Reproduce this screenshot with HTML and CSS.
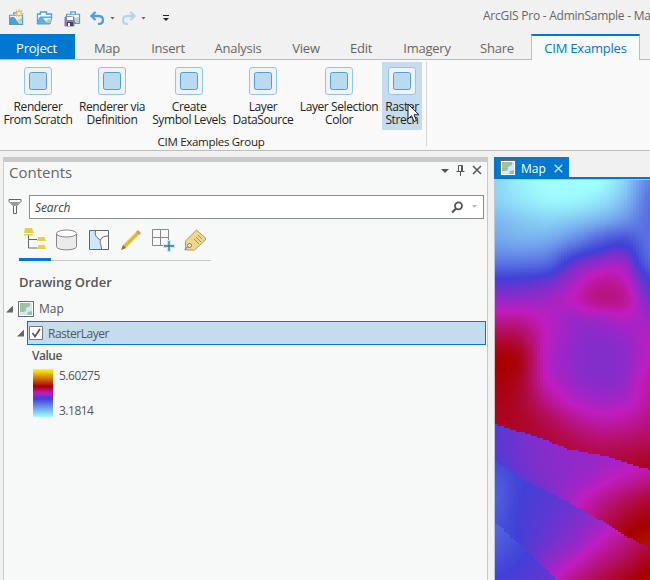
FILE: index.html
```html
<!DOCTYPE html>
<html lang="en">
<head>
<meta charset="utf-8">
<title>ArcGIS Pro - AdminSample</title>
<link rel="stylesheet" href="styles.css">
</head>
<body>
<svg class="defs" aria-hidden="true">
  <symbol id="button-icon" viewBox="0 0 28 28">
    <rect x=".5" y=".5" width="27" height="27" rx="2.5" fill="#f1f2f3" stroke="#8fc7e8"/>
    <rect x="5.5" y="5.5" width="17" height="17" rx="2" fill="#badaef" stroke="#4d9fd6"/>
  </symbol>
  <symbol id="map-icon" viewBox="0 0 16 16">
    <rect x=".5" y=".5" width="15" height="15" fill="#fff" stroke="#6b6b6b"/>
    <path d="M2 2h12v12H2z" fill="#d3e8f5"/>
    <path d="M2 2h10v3L8 7v3L5 11H2zM10 11l4-1v4H9z" fill="#9cc3a1"/>
  </symbol>
  <symbol id="case" viewBox="0 0 16 14">
    <path d="M5 3V1h5v2M.5 3.5h14v10H.5z" fill="#f8fbfd" stroke="#4f9fd4" stroke-width="1.3"/>
    <path d="M1 6q4-2 6 1l4 6H1z" fill="#4f9fd4"/>
    <path d="M9 8l5-2v7h-3z" fill="#bfd5b4"/>
  </symbol>
</svg>

<header class="titlebar">
  <div class="quick">
    <svg class="q-new" viewBox="0 0 18 18"><use href="#case" x="1" y="3" width="15" height="13"/><g stroke="#e0bd47" stroke-width="1.1"><path d="M11 0v9M6.500 4.500h9M7.800 1.300l6.400 6.400M14.200 1.300L7.800 7.700"/></g><rect x="9" y="2.500" width="4" height="4" fill="#fff3b0" stroke="#e0bd47"/></svg>
    <svg class="q-open" viewBox="0 0 18 18"><path d="M1.500 14V5h3V3h6v2h5v3" fill="#f8fbfd" stroke="#4f9fd4" stroke-width="1.300"/><path d="M1 15l3-7h12l-2 7z" fill="#65ade0" stroke="#4f9fd4"/><path d="M7 9h8l-1 5h-3z" fill="#e5efdf"/><path d="M10 14l2-4 3 1-1 3z" fill="#a9cbaa"/></svg>
    <svg class="q-save" viewBox="0 0 18 18"><use href="#case" x="2" y="2" width="15" height="13"/><path d="M1 8h9v9H1z" fill="#8a7bb9" stroke="#8a7bb9"/><path d="M3 8h6v3H3z" fill="#fff"/><path d="M3 13h6v4H3z" fill="#444"/><path d="M4 14h2v3H4z" fill="#fff"/></svg>
    <svg class="q-undo" viewBox="0 0 15 14"><path d="M5.500 1L1.500 5l4 4M2 5h6q5 0 5 4t-5 4" fill="none" stroke="#4f9fd8" stroke-width="2.300"/></svg>
    <i class="caret"></i>
    <svg class="q-redo" viewBox="0 0 15 14"><path d="M9.500 1l4 4-4 4M13 5H7Q2 5 2 9t5 4" fill="none" stroke="#b4d5ea" stroke-width="2.300"/></svg>
    <i class="caret"></i>
    <svg class="q-more" viewBox="0 0 6 7"><path d="M0 .5h6" stroke="#222"/><path d="M0 3h6L3 6z" fill="#222"/></svg>
  </div>
  <div class="app-title">ArcGIS Pro - AdminSample - Map</div>
</header>

<nav class="tabs">
  <span class="tab project">Project</span><span class="tab">Map</span><span class="tab">Insert</span><span class="tab">Analysis</span><span class="tab">View</span><span class="tab">Edit</span><span class="tab">Imagery</span><span class="tab">Share</span><i></i><span class="tab active">CIM Examples</span>
</nav>

<section class="ribbon">
  <div class="group">
    <div class="buttons">
      <div class="button"><svg><use href="#button-icon"/></svg><span>Renderer<br>From Scratch</span></div>
      <div class="button"><svg><use href="#button-icon"/></svg><span>Renderer via<br>Definition</span></div>
      <div class="button"><svg><use href="#button-icon"/></svg><span>Create<br>Symbol Levels</span></div>
      <div class="button"><svg><use href="#button-icon"/></svg><span>Layer<br>DataSource</span></div>
      <div class="button"><svg><use href="#button-icon"/></svg><span>Layer Selection<br>Color</span></div>
      <div class="button hover"><svg><use href="#button-icon"/></svg><span>Raster<br>Strech</span>
        <svg class="cursor" viewBox="0 0 13 20"><path d="M1 1v15l3.500-3.300L7 18.500l2.500-1-2.500-5.700h5z" fill="#fff" stroke="#15152a"/></svg>
      </div>
    </div>
    <div class="group-name">CIM Examples Group</div>
  </div>
</section>

<main class="workspace">
  <aside class="contents">
    <div class="pane-head">
      <h1>Contents</h1>
      <svg class="pane-tools" viewBox="0 0 41 12"><path d="M0 5h8L4 9z" fill="#555"/><path d="M17.500 7V1.500h4V7M15.500 7.500h8M19.500 8v4M20.500 1v6" fill="none" stroke="#555"/><path d="M32 2l8 8M40 2l-8 8" stroke="#555" stroke-width="1.500"/></svg>
    </div>
    <div class="search-row">
      <svg class="funnel" viewBox="0 0 14 17"><path d="M1 1.500h12v2L8.500 8v7.500h-3V8L1 3.500z" fill="#f7f9f8" stroke="#656565"/><path d="M2 4h10L8 8H6z" fill="#999"/></svg>
      <div class="search"><em>Search</em>
        <svg class="search-tools" viewBox="0 0 27 13"><circle cx="7.500" cy="4.800" r="3.500" fill="none" stroke="#555" stroke-width="1.800"/><path d="M5 7.500L1 11.500" stroke="#555" stroke-width="2.200"/><path d="M21 4h5l-2.500 3z" fill="#b5b5b5"/></svg>
      </div>
    </div>
    <div class="list-tabs">
      <svg viewBox="0 0 32 31"><path d="M9.500 7v14H18M9.500 12.500H18" fill="none" stroke="#666"/><path d="M6 1h7l2 5H5zM5 7h9v1.500H5zM19.500 10h6l1.500 4h-9zM19.500 18h6l1.500 4h-9z" fill="#e6ce50"/></svg>
      <svg viewBox="0 0 32 28"><path d="M5.500 5.500v13c0 4.500 20 4.500 20 0v-13" fill="#ebebeb" stroke="#858585"/><ellipse cx="15.500" cy="5.500" rx="10" ry="3.500" fill="#fff" stroke="#858585"/></svg>
      <svg viewBox="0 0 32 28"><path d="M6.500 2.500h19v19h-19z" fill="#fafafa" stroke="#666"/><path d="M7 3h5l1 5 5 5-1 2 2 6H7z" fill="#cfe8f8"/><path d="M12.500 3c-1 5 1 6 5 9.500-1 3 1 4 1 9M17.500 12c1-3 4-4 8-4" fill="none" stroke="#666"/></svg>
      <svg viewBox="0 0 32 28"><path d="M8 17L22 3l3 3-14 14-4 1.500z" fill="#e3c942"/><path d="M9 19L24 4" stroke="#b39b33" stroke-width=".7"/><path d="M21 4l2-2 3 3-2 2z" fill="#d89080"/><path d="M6 22l2-5 3 3z" fill="#8b713b"/></svg>
      <svg viewBox="0 0 32 28"><path d="M5.500 1.500h16v16h-16zM13.500 1.500v16M5.500 9.500h16" fill="#fafafa" stroke="#888"/><path d="M22 12v12M16 18h12" stroke="#c5e9fa" stroke-width="4"/><path d="M22 13v10M17 18h10" stroke="#3f7186" stroke-width="1.300"/></svg>
      <svg viewBox="0 0 32 28"><path d="M6.500 13L17.500 2l9 8v2L15.500 22h-9z" fill="#eed88d" stroke="#b49b61"/><path d="M15 11l5 5M17 9l5 5M19 7l4 4" stroke="#a18a54"/><circle cx="10.500" cy="17.500" r="2" fill="#fff" stroke="#777"/><path d="M9.500 18l-4 4" stroke="#777"/></svg>
    </div>
    <h2>Drawing Order</h2>
    <div class="tree-row map-row"><i class="expander"></i><svg class="map-icon"><use href="#map-icon"/></svg><span>Map</span></div>
    <div class="tree-row layer-row"><i class="expander"></i><div class="layer"><svg class="check" viewBox="0 0 14 14"><path d="M.5.500h13v13H.5z" fill="#fff" stroke="#777"/><path d="M3.500 7l2.500 3.500L11 3" fill="none" stroke="#555" stroke-width="1.600"/></svg><span>RasterLayer</span></div></div>
    <div class="legend">
      <h3>Value</h3>
      <div class="ramp-row"><div class="ramp"></div><div class="ramp-values"><span>5.60275</span><span>3.1814</span></div></div>
    </div>
  </aside>
  <section class="view">
    <div class="view-tab"><svg class="map-icon"><use href="#map-icon"/></svg><span>Map</span><svg class="close" viewBox="0 0 9 9"><path d="M.7.700l7.600 7.600M8.300.700L.7 8.300" stroke="#c2e2f7" stroke-width="1.300"/></svg></div>
    <canvas id="raster" width="155" height="400"></canvas>
  </section>
</main>
<script src="raster.js"></script>
</body>
</html>
```
FILE: raster.js
```js
// Colour stops of the stretch ramp, by percent of the value range.
const stops = [[0,160,255,255],[38,64,64,216],[50,192,28,192],[64,168,0,0],[100,255,255,0]];
// Each zone is a smooth surface sampled on a 7-column grid with 20px rows.
const zones = [
  { top: 0, rows: [
    [8,3,0,0,0,9,25],[9,5,2,2,5,13,28],[14,11,9,11,15,21,29],[18,16,17,23,31,35,28],
    [26,26,28,39,44,45,30],[38.5,39,41,47,52,50.5,38],[46,46,47,50,54,53,43],[53,53,49.5,46.5,47,48.5,47.5],
    [60,58.5,50,45.7,44.7,46,49.2],[64,62,49.5,45.5,44.2,45.3,50],[63.5,61,50.5,46.3,44.6,45.8,52],[62.5,60.5,54,49,47.2,48,52.5],
    [61.5,61,58,54,51.5,52,54.5],[60,60.5,60,58,56,56.5,57.5],[60,60,61,60,59.5,60,61],[60,60,61,61,61,62,62]] },
  { top: 240, line: [[0,244],[48,259],[73,269],[110,276],[155,290]], rows: [
    [40,43,44.5,45,46,47,48],[40,43,44.5,45.5,46,47,48],[39.5,42.5,44.5,45.5,46.5,48,50],[38,41,44,46,48.5,51.5,54],
    [37,39,42.5,48,53,57,60],[36,37,41,50,56,61,63.5],[36,37,41,52,59,64,66],[36,37,41,54,60,65,67]] },
  { top: 280, line: [[0,282],[33,302],[73,322],[100,337],[133,357],[155,368]], rows: [
    [36,39,41,43,45,48,50],[33,37.5,40,42.5,45,48,50],[32,38,40,42,45,48,51],[34,38.5,41,43.5,46.5,50,53],
    [36,38.5,42,45,49.5,54,58],[37,40,44.5,49,54,58,62],[38,42,48,53.5,58,62,65]] },
  { top: 340, line: [[0,342],[27,367],[45,383],[62,400],[155,490]], rows: [
    [30,34,38,40,40,40,40],[32,36,39,40,40,40,40],[35,38,40,42,42,42,42],[38,39.5,41.5,43,44,44,44]] }
];
const cubic = (a, b, c, d, t) =>
  b + .5 * t * (c - a + t * (2 * a - 5 * b + 4 * c - d + t * (3 * (b - c) + d - a)));
const at = (list, i) => list[Math.max(0, Math.min(list.length - 1, i))];
function sample(zone, x, y) {
  const gx = x / 155 * 6, gy = (y - zone.top) / 20;
  const i = Math.floor(gx), j = Math.floor(gy), u = gx - i, v = gy - j;
  const r = [-1, 0, 1, 2].map(k => {
    const row = at(zone.rows, j + k);
    return cubic(at(row, i - 1), at(row, i), at(row, i + 1), at(row, i + 2), u);
  });
  return cubic(r[0], r[1], r[2], r[3], v);
}
function lineY(line, x) {
  let k = 1;
  while (k < line.length - 1 && line[k][0] < x) k++;
  const [x0, y0] = line[k - 1], [x1, y1] = line[k];
  return y0 + (y1 - y0) * (x - x0) / (x1 - x0);
}
function color(value) {
  const v = Math.max(0, Math.min(100, value));
  let k = 1;
  while (stops[k][0] < v) k++;
  const a = stops[k - 1], b = stops[k], t = (v - a[0]) / (b[0] - a[0]);
  return `rgb(${[1, 2, 3].map(n => Math.round(a[n] + (b[n] - a[n]) * t))})`;
}
const ctx = document.getElementById('raster').getContext('2d');
const cellW = 3, cellH = 2;
for (let y = 0; y < 400; y += cellH) {
  for (let x = 0; x < 155; x += cellW) {
    let zone = zones[0];
    for (const z of zones.slice(1)) if (y + 1 > lineY(z.line, x + 1.5)) zone = z;
    ctx.fillStyle = color(sample(zone, x + 1.5, y + 1));
    ctx.fillRect(x, y, cellW, cellH);
  }
}
```
FILE: styles.css
```css
* { box-sizing: border-box; }
body { margin: 0; width: 650px; height: 580px; overflow: hidden; background: #f1f1f1; color: #555; font: 12px "Open Sans", "Noto Sans", sans-serif; }
svg { display: block; flex: none; }
h1, h2, h3 { margin: 0; }
.defs { display: none; }

.titlebar { display: flex; justify-content: space-between; height: 34px; }
.quick { display: flex; align-items: center; padding: 2px 0 0 8px; }
.q-new, .q-open, .q-save { width: 18px; height: 18px; }
.q-open, .q-save { margin-left: 10px; }
.q-undo, .q-redo { width: 15px; height: 14px; }
.q-undo { margin-left: 8px; }
.q-redo { margin-left: 6px; }
.q-more { width: 6px; height: 7px; margin-left: 17px; }
.caret { width: 5px; height: 3px; margin-left: 5px; background: #666; clip-path: polygon(0 0, 100% 0, 50% 100%); }
.app-title { width: 167px; padding-top: 8px; line-height: 16px; letter-spacing: -.25px; white-space: nowrap; overflow: hidden; color: #666; }

.tabs { display: grid; grid-template-columns: 75px 64px 58px 82px 54px 56px 76px 64px 2px 109px 10px; height: 26px; border-bottom: 1px solid #bdbdbd; }
.tab { height: 25px; text-align: center; font-size: 13px; line-height: 29px; letter-spacing: -.22px; white-space: nowrap; color: #666; }
.project { padding-right: 2px; background: #0078d0; color: #fff; }
.active { height: 26px; border: solid #bdbdbd; border-width: 2px 1px 0; border-top-color: #0078d0; background: #f9f9f9; color: #0078d0; line-height: 25px; }

.ribbon { height: 91px; padding-top: 2px; background: #f9f9f9; border-bottom: 1px solid #bdbdbd; }
.group { width: 427px; height: 84px; border-right: 1px solid #d5d5d5; color: #222; }
.buttons { display: grid; grid-template-columns: 76px 72px 82px 66px 86px 40px; height: 68px; }
.button { display: flex; flex-direction: column; align-items: center; padding-top: 5px; text-align: center; line-height: 13px; letter-spacing: -.4px; white-space: nowrap; }
.button > svg { width: 28px; height: 28px; }
.button span { padding-top: 5px; }
.hover { position: relative; background: #c5dcef; }
.hover .cursor { position: absolute; left: 25px; top: 41px; width: 13px; height: 20px; }
.group-name { padding-right: 4px; text-align: center; font-size: 11.5px; line-height: 24px; letter-spacing: -.3px; }

.workspace { display: grid; grid-template-columns: 485px 156px; gap: 6px; padding: 6px 0 0 3px; height: 429px; }
.contents { border: 1px solid #c9c9c9; border-top: 5px solid #c9c9c9; border-bottom: 0; background: #f7f9f8; }
.pane-head { display: flex; justify-content: space-between; height: 30px; padding: 0 5px; }
.pane-head h1 { font-size: 15px; font-weight: 400; line-height: 21px; color: #666; }
.pane-tools { width: 41px; height: 12px; margin-top: 2px; }
.search-row { display: flex; height: 30px; padding: 3px 3px 3px 4px; }
.funnel { width: 14px; height: 17px; margin-top: 3px; }
.search { display: flex; justify-content: space-between; width: 455px; height: 24px; margin-left: 7px; padding: 0 5px; border: 1px solid #8d8d8d; background: #fff; line-height: 23px; letter-spacing: -.1px; color: #444; }
.search-tools { width: 27px; height: 13px; margin-top: 5px; }
.list-tabs { display: flex; width: 192px; height: 34px; margin: 5px 0 0 15px; border-bottom: 1px solid #c9c9c9; }
.list-tabs svg { width: 32px; height: 28px; margin-top: 1px; }
.list-tabs svg:first-child { height: 34px; margin-top: 0; border-bottom: 3px solid #0078d0; }
h2 { height: 36px; padding-left: 15px; font-size: 13px; font-weight: 600; line-height: 43px; color: #555; }
.tree-row { display: flex; align-items: center; height: 24px; }
.map-row { padding-left: 2px; }
.map-row span { padding-bottom: 1px; }
.expander { width: 7px; height: 7px; background: #666; clip-path: polygon(100% 0, 100% 100%, 0 100%); }
.map-icon { width: 16px; height: 16px; margin: 0 5px; }
.layer-row { padding-left: 13px; }
.layer { display: flex; align-items: center; width: 459px; height: 24px; margin-left: 3px; padding-left: 1px; border: 1px solid #0078d0; background: #c5dcef; letter-spacing: -.5px; }
.check { width: 14px; height: 14px; margin-right: 5px; }
.legend { padding-left: 29px; }
h3 { height: 24px; margin-left: -1px; font-size: 12px; font-weight: 600; line-height: 22px; letter-spacing: -.5px; }
.ramp-row { display: flex; gap: 6px; height: 48px; }
.ramp { width: 20px; background: linear-gradient(#ff0, #a80000 36%, #c01cc0 50%, #4040d8 62%, #a0ffff); }
.ramp-values { display: flex; flex-direction: column; justify-content: space-between; height: 49px; line-height: 14px; letter-spacing: -.5px; }

.view { display: flex; flex-direction: column; align-items: flex-start; }
.view-tab { display: flex; align-items: center; width: 75px; height: 20px; padding: 2px 0 0 1px; background: #0078d0; color: #fff; }
.close { width: 9px; height: 9px; margin-left: 8px; }
#raster { display: block; width: 156px; height: 401px; margin-top: 2px; border: solid #c5c5c5; border-width: 1px 0 0 1px; box-shadow: 0 -2px #0078d0; }
```
